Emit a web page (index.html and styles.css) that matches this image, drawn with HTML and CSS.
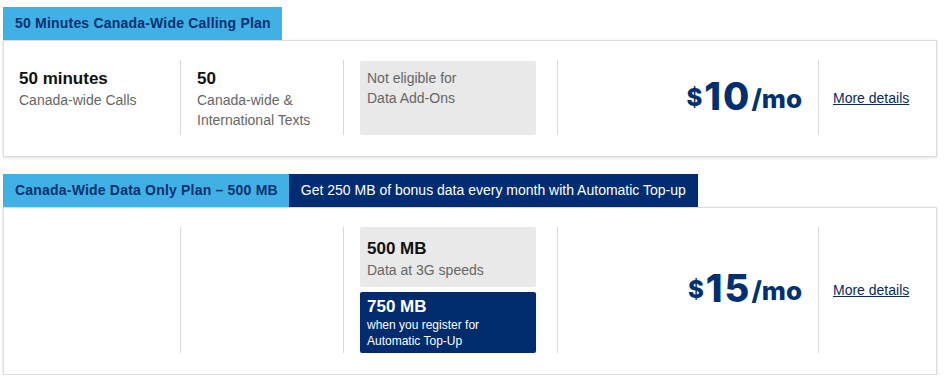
FILE: index.html
```html
<!DOCTYPE html>
<html lang="en">
<head>
    <meta charset="UTF-8">
    <meta name="viewport" content="width=device-width, initial-scale=1.0">
    <title>Plans</title>
    <link rel="stylesheet" href="styles.css">
</head>
<body>
    <div class="plans">
        <div class="plan">
            <div class="tabs">
                <div class="tab">50 Minutes Canada-Wide Calling Plan</div>
            </div>
            <div class="card">
                <div class="col">
                    <div class="feature">50 minutes</div>
                    <div class="desc">Canada-wide Calls</div>
                </div>
                <div class="col">
                    <div class="feature">50</div>
                    <div class="desc">Canada-wide &amp;<br>International Texts</div>
                </div>
                <div class="col">
                    <div class="box grey">
                        <div class="desc">Not eligible for<br>Data Add-Ons</div>
                    </div>
                </div>
                <div class="col price-col">
                    <div class="price"><span class="cur">$</span><span class="amount">10</span><span class="per">/mo</span></div>
                </div>
                <div class="col link-col">
                    <a href="#" class="details">More details</a>
                </div>
            </div>
        </div>

        <div class="plan">
            <div class="tabs">
                <div class="tab">Canada-Wide Data Only Plan &ndash; 500 MB</div>
                <div class="tab promo">Get 250 MB of bonus data every month with Automatic Top-up</div>
            </div>
            <div class="card">
                <div class="col"></div>
                <div class="col"></div>
                <div class="col stack">
                    <div class="box grey tall">
                        <div class="feature">500 MB</div>
                        <div class="desc">Data at 3G speeds</div>
                    </div>
                    <div class="box navy">
                        <div class="feature">750 MB</div>
                        <div class="small">when you register for<br>Automatic Top-Up</div>
                    </div>
                </div>
                <div class="col price-col">
                    <div class="price"><span class="cur">$</span><span class="amount">15</span><span class="per">/mo</span></div>
                </div>
                <div class="col link-col">
                    <a href="#" class="details">More details</a>
                </div>
            </div>
        </div>
    </div>
</body>
</html>
```

FILE: styles.css
```css
body {
    font-family: "Liberation Sans", Arial, sans-serif;
    margin: 0;
    padding: 0;
    background-color: #fff;
}
.plans {
    padding: 7px 8px 0 3px;
    display: flex;
    flex-direction: column;
    gap: 17px;
}
.tabs {
    display: flex;
}
.tab {
    background-color: #41b0e4;
    color: #063072;
    font-weight: bold;
    font-size: 14px;
    letter-spacing: 0.2px;
    height: 33px;
    line-height: 33px;
    padding: 0 11px 0 12px;
}
.tab.promo {
    background-color: #002d72;
    color: #fff;
    font-weight: normal;
    letter-spacing: 0;
    padding: 0 12px;
}
.card {
    display: grid;
    grid-template-columns: 176px 163px 214px 261px 1fr;
    padding: 19px 0 21px;
    border: 1px solid #dcdcdc;
    box-shadow: 0 1px 3px rgba(0, 0, 0, 0.12);
    background: #fff;
}
.col {
    padding-left: 16px;
    padding-top: 7px;
    border-left: 1px solid #d9d9d9;
    min-height: 68px;
}
.col:first-child {
    border-left: none;
    padding-left: 15px;
}
.feature {
    font-size: 17px;
    font-weight: bold;
    line-height: 23px;
    color: #111;
}
.desc {
    font-size: 14px;
    line-height: 20px;
    color: #666;
}
.box {
    width: 176px;
    box-sizing: border-box;
    padding: 7px 7px;
    border-radius: 2px;
}
.col .grey {
    background-color: #e9e9e9;
    height: 74px;
    margin-top: -6px;
}
.stack {
    padding-top: 0;
    display: flex;
    flex-direction: column;
    gap: 5px;
}
.col .grey.tall {
    margin-top: 0;
    height: 60px;
    padding-top: 10px;
}
.navy {
    background-color: #002c6e;
    color: #fff;
    height: 61px;
    padding-top: 5px;
}
.navy .feature {
    color: #fff;
    line-height: 20px;
}
.small {
    font-size: 12px;
    line-height: 16px;
}
.price-col {
    padding: 0 16px 0 0;
    display: flex;
    align-items: center;
    justify-content: flex-end;
}
.price {
    font-family: Inter, sans-serif;
    font-weight: 800;
    color: #00306f;
    white-space: nowrap;
    margin-top: -4px;
}
.cur {
    font-size: 24px;
    vertical-align: 4px;
    margin-right: 2px;
}
.amount {
    font-size: 38px;
    letter-spacing: 2px;
}
.per {
    font-size: 26px;
    vertical-align: 2px;
}
.link-col {
    padding: 0 0 0 14px;
    display: flex;
    align-items: center;
}
.details {
    font-size: 14px;
    color: #0b2a63;
    text-decoration: underline;
}
```
